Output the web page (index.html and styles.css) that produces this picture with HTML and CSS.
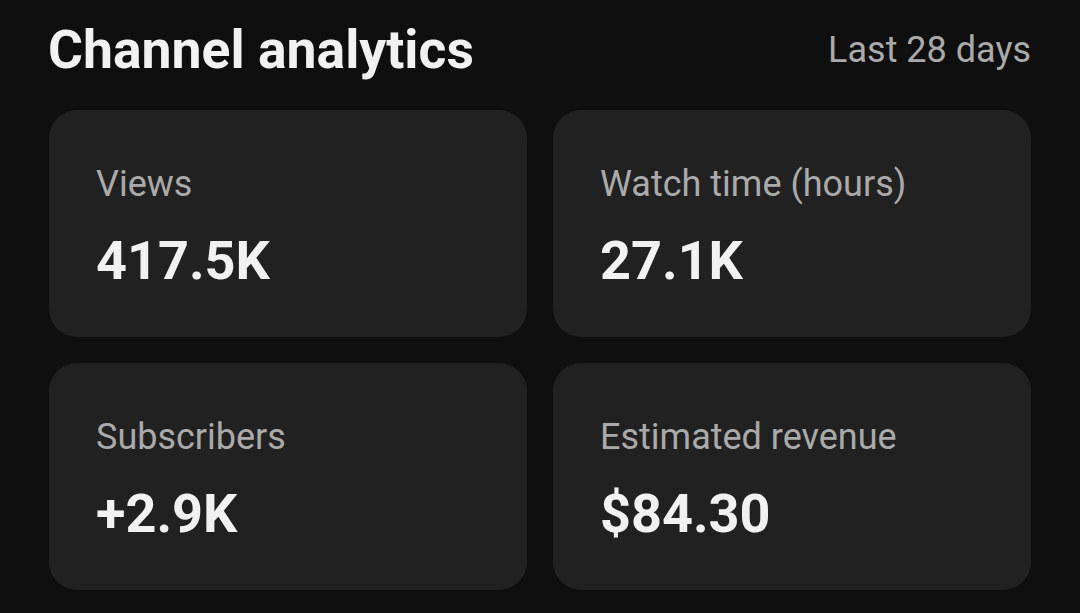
FILE: index.html
```html
<!DOCTYPE html>
<html lang="en">
<head>
    <meta charset="UTF-8">
    <meta name="viewport" content="width=device-width, initial-scale=1.0">
    <title>Channel analytics</title>
    <link rel="stylesheet" href="styles.css">
</head>
<body>
    <section class="analytics">
        <header class="analytics-header">
            <h1>Channel analytics</h1>
            <span class="period">Last 28 days</span>
        </header>

        <!-- Cartes des statistiques -->
        <div class="stats">
            <div class="stat-card">
                <div class="stat-label">Views</div>
                <div class="stat-value">417.5K</div>
            </div>
            <div class="stat-card">
                <div class="stat-label">Watch time (hours)</div>
                <div class="stat-value">27.1K</div>
            </div>
            <div class="stat-card">
                <div class="stat-label">Subscribers</div>
                <div class="stat-value">+2.9K</div>
            </div>
            <div class="stat-card">
                <div class="stat-label">Estimated revenue</div>
                <div class="stat-value">$84.30</div>
            </div>
        </div>
    </section>
</body>
</html>
```

FILE: styles.css
```css
:root {
  --bg: #0f0f0f;
  --card: #212121;
  --text: #f1f1f1;
  --muted: #aaaaaa;
}

body {
  margin: 0;
  background: var(--bg);
  font-family: Roboto, "Noto Sans", sans-serif;
  color: var(--text);
}

.analytics {
  padding: 18px 49px 0 48px;
}

.analytics-header {
  display: flex;
  justify-content: space-between;
  align-items: center;
}

.analytics-header h1 {
  margin: 0;
  font-size: 53.5px;
  font-weight: 700;
  line-height: 63px;
}

.period {
  font-size: 36px;
  line-height: 42px;
  color: var(--muted);
}

.stats {
  display: grid;
  grid-template-columns: 1fr 1fr;
  gap: 26px;
  margin-top: 29px;
  margin-left: 1px;
}

.stat-card {
  background: var(--card);
  border-radius: 28px;
  padding: 53px 46px 45px 47px;
}

.stat-label {
  font-size: 36px;
  line-height: 42px;
  color: var(--muted);
}

.stat-value {
  margin-top: 24px;
  font-size: 54px;
  font-weight: 700;
  line-height: 63px;
}
```
